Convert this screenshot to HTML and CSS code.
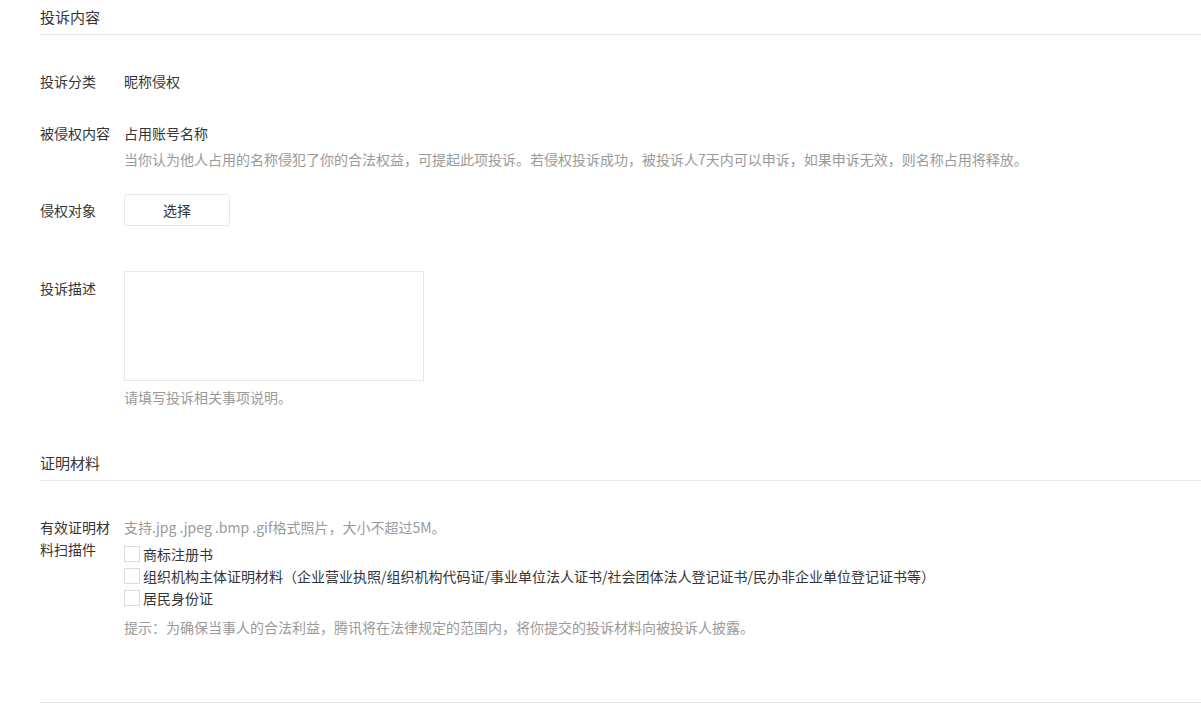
FILE: index.html
```html
<!DOCTYPE html>
<html lang="zh-CN">
<head>
<meta charset="utf-8">
<title>投诉</title>
<link rel="stylesheet" href="styles.css">
</head>
<body>
<div class="page">
  <div class="section-title">投诉内容</div>
  <div class="form">
    <div class="row row-first">
      <div class="label">投诉分类</div>
      <div class="content">昵称侵权</div>
    </div>
    <div class="row row-2">
      <div class="label">被侵权内容</div>
      <div class="content">
        <div>占用账号名称</div>
        <div class="tips tips-tight">当你认为他人占用的名称侵犯了你的合法权益，可提起此项投诉。若侵权投诉成功，被投诉人7天内可以申诉，如果申诉无效，则名称占用将释放。</div>
      </div>
    </div>
    <div class="row row-3 row-center">
      <div class="label">侵权对象</div>
      <div class="content"><button class="btn" type="button">选择</button></div>
    </div>
    <div class="row row-4">
      <div class="label label-offset">投诉描述</div>
      <div class="content">
        <textarea class="textarea"></textarea>
        <div class="tips tips-after-area">请填写投诉相关事项说明。</div>
      </div>
    </div>
  </div>

  <div class="section-title section-title-2">证明材料</div>
  <div class="form">
    <div class="row row-first">
      <div class="label">有效证明材料扫描件</div>
      <div class="content">
        <div class="tips">支持.jpg .jpeg .bmp .gif格式照片，大小不超过5M。</div>
        <div class="checks">
          <label class="check"><span class="box"></span><span>商标注册书</span></label>
          <label class="check"><span class="box"></span><span>组织机构主体证明材料（企业营业执照/组织机构代码证/事业单位法人证书/社会团体法人登记证书/民办非企业单位登记证书等）</span></label>
          <label class="check"><span class="box"></span><span>居民身份证</span></label>
        </div>
        <div class="tips tips-note">提示：为确保当事人的合法利益，腾讯将在法律规定的范围内，将你提交的投诉材料向被投诉人披露。</div>
      </div>
    </div>
  </div>
  <div class="footer-line"></div>
</div>
</body>
</html>
```

FILE: styles.css
```css
html, body {
  margin: 0;
  padding: 0;
  background: #ffffff;
}

body {
  font-family: "Noto Sans CJK SC", "Microsoft YaHei", sans-serif;
  font-size: 14px;
  color: #353535;
}

.page {
  padding-left: 40px;
}

.section-title {
  height: 34px;
  line-height: 34px;
  font-size: 15px;
  color: #353535;
  border-bottom: 1px solid #e7e7e7;
}

.section-title-2 {
  margin-top: 38px;
}

.row {
  display: flex;
  align-items: flex-start;
  line-height: 22px;
}

.row-first {
  margin-top: 35px;
}

.row-2 {
  margin-top: 30px;
}

.row-3 {
  margin-top: 24px;
}

.row-4 {
  margin-top: 45px;
}

.row-center {
  align-items: center;
}

.label {
  width: 70px;
  margin-right: 14px;
  flex-shrink: 0;
  color: #353535;
  word-break: break-all;
}

.label-offset {
  padding-top: 6px;
}

.content {
  flex: 1;
  min-width: 0;
}

.tips {
  color: #9a9a9a;
}

.tips-tight {
  margin-top: 4px;
}

.tips-after-area {
  margin-top: 5px;
}

.tips-note {
  margin-top: 7px;
}

.btn {
  display: block;
  width: 106px;
  height: 32px;
  padding: 0;
  border: 1px solid #e4e8eb;
  border-radius: 3px;
  background: #ffffff;
  font-family: inherit;
  font-size: 14px;
  color: #353535;
  cursor: pointer;
}

.textarea {
  display: block;
  width: 300px;
  height: 110px;
  box-sizing: border-box;
  border: 1px solid #e7e7e7;
  border-radius: 0;
  padding: 6px 8px;
  margin: 0;
  resize: none;
  font-family: inherit;
  font-size: 14px;
  outline: none;
}

.checks {
  margin-top: 5px;
}

.check {
  display: flex;
  align-items: center;
  height: 22px;
  color: #353535;
}

.box {
  width: 14px;
  height: 14px;
  border: 1px solid #dcdcdc;
  box-sizing: content-box;
  margin-right: 3px;
  flex-shrink: 0;
  background: #ffffff;
}

.footer-line {
  margin-top: 64px;
  border-top: 1px solid #e7e7e7;
}
```
